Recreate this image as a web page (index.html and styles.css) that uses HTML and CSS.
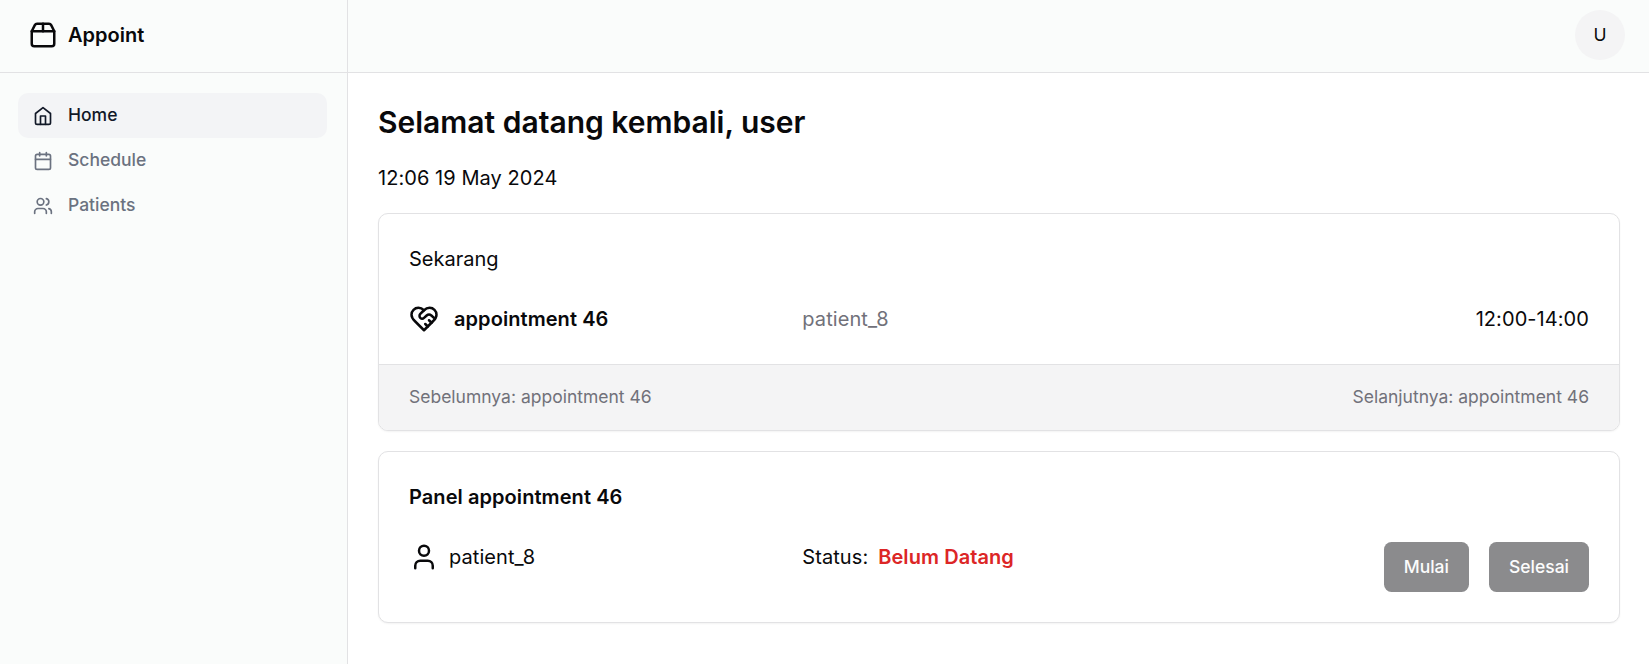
FILE: index.html
```html
<!DOCTYPE html>
<html lang="id">
<head>
<meta charset="utf-8">
<title>Appoint</title>
<link rel="stylesheet" href="styles.css">
</head>
<body>
<div class="app">
  <aside class="sidebar">
    <div class="brand">
      <svg class="icon icon-lg" viewBox="0 0 24 24"><path d="M3 9h18v10a2 2 0 0 1-2 2H5a2 2 0 0 1-2-2V9Z"/><path d="m3 9 2.45-4.9A2 2 0 0 1 7.24 3h9.52a2 2 0 0 1 1.8 1.1L21 9"/><path d="M12 3v6"/></svg>
      <span>Appoint</span>
    </div>
    <nav class="nav">
      <a class="nav-item active">
        <svg class="icon icon-sm" viewBox="0 0 24 24"><path d="m3 9 9-7 9 7v11a2 2 0 0 1-2 2H5a2 2 0 0 1-2-2z"/><path d="M9 22V12h6v10"/></svg>
        <span class="nav-label">Home</span>
      </a>
      <a class="nav-item">
        <svg class="icon icon-sm" viewBox="0 0 24 24"><path d="M8 2v4"/><path d="M16 2v4"/><rect width="18" height="18" x="3" y="4" rx="2"/><path d="M3 10h18"/></svg>
        <span class="nav-label">Schedule</span>
      </a>
      <a class="nav-item">
        <svg class="icon icon-sm" viewBox="0 0 24 24"><path d="M16 21v-2a4 4 0 0 0-4-4H6a4 4 0 0 0-4 4v2"/><circle cx="9" cy="7" r="4"/><path d="M22 21v-2a4 4 0 0 0-3-3.87"/><path d="M16 3.13a4 4 0 0 1 0 7.75"/></svg>
        <span class="nav-label">Patients</span>
      </a>
    </nav>
  </aside>
  <div class="content">
    <header class="topbar"><div class="avatar">U</div></header>
    <main class="main">
      <h1 class="title">Selamat datang kembali, user</h1>
      <p class="date">12:06 19 May 2024</p>
      <section class="card">
        <div class="card-body">
          <div class="label">Sekarang</div>
          <div class="row">
            <div class="cell cell-wide">
              <svg class="icon icon-lg" viewBox="0 0 24 24"><path d="M19 14c1.49-1.46 3-3.21 3-5.5A5.5 5.5 0 0 0 16.5 3c-1.76 0-3 .5-4.5 2-1.5-1.5-2.74-2-4.5-2A5.5 5.5 0 0 0 2 8.5c0 2.3 1.5 4.05 3 5.5l7 7Z"/><path d="M12 5 9.04 7.96a2.17 2.17 0 0 0 0 3.08c.82.82 2.13.85 3 .07l2.07-1.9a2.82 2.82 0 0 1 3.79 0l2.96 2.66"/><path d="m18 15-2-2"/><path d="m15 18-2-2"/></svg>
              <span class="strong">appointment 46</span>
            </div>
            <div class="muted">patient_8</div>
            <div class="end">12:00-14:00</div>
          </div>
        </div>
        <div class="card-footer">
          <span>Sebelumnya: appointment 46</span>
          <span>Selanjutnya: appointment 46</span>
        </div>
      </section>
      <section class="card">
        <div class="card-body">
          <div class="strong">Panel appointment 46</div>
          <div class="row">
            <div class="cell">
              <svg class="icon icon-lg" viewBox="0 0 24 24"><path d="M19 21v-2a4 4 0 0 0-4-4H9a4 4 0 0 0-4 4v2"/><circle cx="12" cy="7" r="4"/></svg>
              <span>patient_8</span>
            </div>
            <div class="cell"><span>Status:</span><span class="strong danger">Belum Datang</span></div>
            <div class="actions">
              <button class="btn" disabled>Mulai</button>
              <button class="btn" disabled>Selesai</button>
            </div>
          </div>
        </div>
      </section>
    </main>
  </div>
</div>
</body>
</html>
```
FILE: styles.css
```css
* { box-sizing: border-box; }

body {
  margin: 0;
  background: #fff;
  color: #09090b;
  font-family: Inter, "Liberation Sans", sans-serif;
  font-size: 20px;
  line-height: 30px;
}

.app {
  display: grid;
  grid-template-columns: 348px 1fr;
  height: 664px;
  overflow: hidden;
}

.icon {
  flex: none;
  fill: none;
  stroke: currentColor;
  stroke-width: 2;
  stroke-linecap: round;
  stroke-linejoin: round;
}
.icon-lg { width: 30px; height: 30px; }
.icon-sm { width: 20px; height: 20px; }

.sidebar {
  border-right: 1px solid #e2e2e4;
  background: #fafcfb;
}

.brand {
  display: flex;
  align-items: center;
  gap: 10px;
  height: 73px;
  padding: 0 28px 2px;
  border-bottom: 1px solid #e2e2e4;
  font-weight: 600;
}

.nav {
  display: flex;
  flex-direction: column;
  padding: 20px 20px 0 18px;
}

.nav-item {
  display: flex;
  align-items: center;
  gap: 15px;
  height: 45px;
  padding: 0 15px;
  border-radius: 10px;
  color: #6b7280;
  font-size: 17.5px;
  font-weight: 500;
  line-height: 25px;
}
.nav-label { padding-bottom: 2px; }
.nav-item.active {
  background: #f3f4f6;
  color: #111827;
}

.topbar {
  display: flex;
  align-items: center;
  justify-content: flex-end;
  height: 73px;
  padding: 0 24px 2px;
  border-bottom: 1px solid #e2e2e4;
  background: #fafcfb;
}

.avatar {
  display: flex;
  align-items: center;
  justify-content: center;
  width: 50px;
  height: 50px;
  border-radius: 50%;
  background: #f4f4f5;
  font-size: 17.5px;
}

.main {
  display: flex;
  flex-direction: column;
  gap: 20px;
  padding: 29px 29px 0 30px;
}

.title {
  margin: 0 0 1px;
  font-size: 30px;
  font-weight: 600;
  line-height: 40px;
}

.date {
  margin: 0;
  letter-spacing: 0.06px;
}

.card {
  overflow: hidden;
  border: 1px solid #e2e2e4;
  border-radius: 10px;
  background: #fff;
  box-shadow: 0 1px 2px rgba(0, 0, 0, 0.05);
}

.card-body {
  display: flex;
  flex-direction: column;
  gap: 30px;
  padding: 30px;
  letter-spacing: 0.07px;
}

.row {
  display: grid;
  grid-template-columns: repeat(3, 1fr);
  align-items: start;
}

.label { letter-spacing: 0; }
.cell { display: flex; gap: 10px; }
.cell-wide { gap: 15px; }
.strong { font-weight: 600; }
.muted { color: #71717a; }
.danger { color: #dc2626; }
.end { text-align: right; }

.card-footer {
  display: flex;
  justify-content: space-between;
  padding: 19px 30px 21px;
  border-top: 1px solid #e2e2e4;
  background: #f4f4f5;
  color: #71717a;
  font-size: 17.5px;
  line-height: 25px;
}

.actions {
  display: flex;
  justify-content: flex-end;
  gap: 20px;
}

.btn {
  height: 50px;
  padding: 0 20px 2px;
  border: 0;
  border-radius: 7.5px;
  background: #8b8b8d;
  color: #fcfcfc;
  font: 500 17.5px/25px Inter, "Liberation Sans", sans-serif;
}
```
